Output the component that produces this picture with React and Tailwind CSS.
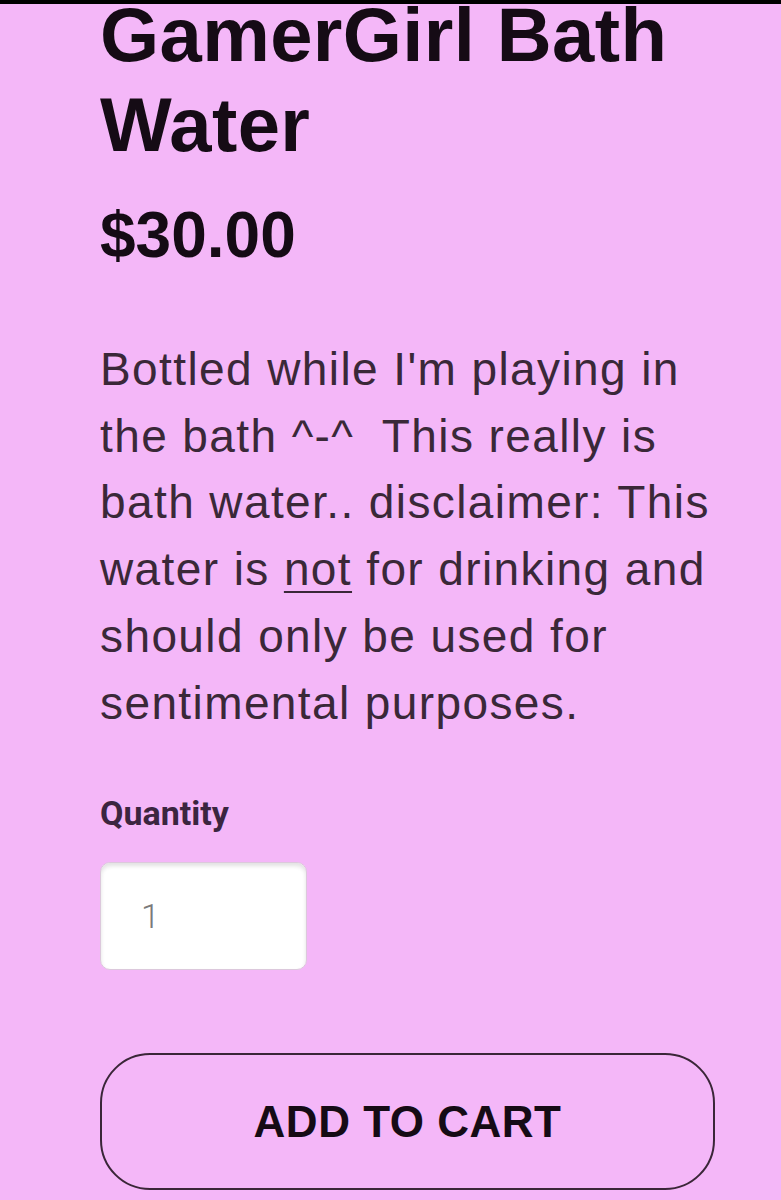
import React from "react";

const App = () => {
  return (
    <div className="min-h-[1200px] bg-[#f4b7f8] border-t-4 border-black font-['Liberation_Sans',Arial,sans-serif]">
      <div className="pl-[100px] w-[715px]">
        {/* Title */}
        <h1 className="text-[76px] font-bold text-[#150b15] tracking-[0.4px]">
          <span className="block leading-[62px]">GamerGirl Bath</span>
          <span className="block mt-[13px] leading-[92px]">Water</span>
        </h1>

        {/* Price */}
        <p className="mt-[26px] text-[64px] leading-[77px] font-bold text-[#150b15]">$30.00</p>

        {/* Description */}
        <p className="mt-[62px] text-[46px] leading-[66.7px] tracking-[1.4px] text-[#3a2838]">
          Bottled while I'm playing in
          <br />
          the bath ^-^&nbsp; This really is
          <br />
          bath water.. disclaimer: This
          <br />
          water is <span className="underline underline-offset-[6px] decoration-2">not</span> for drinking and
          <br />
          should only be used for
          <br />
          sentimental purposes.
        </p>

        {/* Quantity */}
        <label className="block mt-[58px] text-[34px] leading-[38px] font-bold text-[#3b2540] font-['Roboto',sans-serif]">
          Quantity
        </label>
        <div className="mt-[30px] w-[207px] h-[108px] bg-white rounded-[10px] border border-[#dcc8dc] shadow-[inset_0_3px_4px_rgba(0,0,0,0.12)] flex items-center pl-[40px]">
          <span className="text-[34px] font-light text-[#7a7a7a] font-['Roboto',sans-serif]">1</span>
        </div>

        {/* Add to cart */}
        <button className="mt-[83px] w-[615px] h-[137px] rounded-[50px] border-2 border-[#3a2638] bg-transparent flex items-center justify-center text-[44px] font-bold text-[#150b15] tracking-[0.5px]">
          ADD TO CART
        </button>
      </div>
    </div>
  );
};

export default App;
